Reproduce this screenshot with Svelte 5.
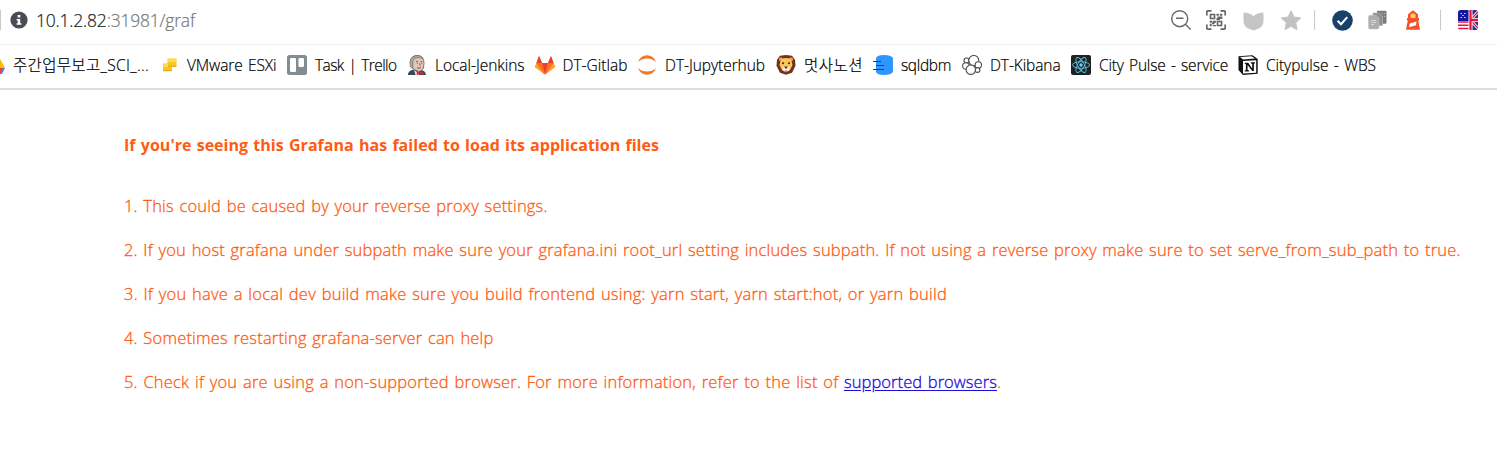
<script>
  const bookmarks = [
    { icon: 'ads', label: '주간업무보고_SCI_...', width: 136, slot: 174 },
    { icon: 'vmware', label: 'VMware ESXi', width: 89.5, slot: 128 },
    { icon: 'trello', label: 'Task | Trello', width: 81.5, slot: 120 },
    { icon: 'jenkins', label: 'Local-Jenkins', width: 89.5, slot: 127.5 },
    { icon: 'gitlab', label: 'DT-Gitlab', width: 65, slot: 102.5 },
    { icon: 'jupyter', label: 'DT-Jupyterhub', width: 100, slot: 139 },
    { icon: 'lion', label: '멋사노션', width: 59, slot: 97 },
    { icon: 'sqldbm', label: 'sqldbm', width: 50, slot: 89 },
    { icon: 'kibana', label: 'DT-Kibana', width: 70.5, slot: 109 },
    { icon: 'react', label: 'City Pulse - service', width: 129, slot: 167 },
    { icon: 'notion', label: 'Citypulse - WBS', width: 110, slot: 150 }
  ];
  const causes = [
    { text: '1. This could be caused by your reverse proxy settings.', width: 423.5 },
    { text: '2. If you host grafana under subpath make sure your grafana.ini root_url setting includes subpath. If not using a reverse proxy make sure to set serve_from_sub_path to true.', width: 1336.5 },
    { text: '3. If you have a local dev build make sure you build frontend using: yarn start, yarn start:hot, or yarn build', width: 823 },
    { text: '4. Sometimes restarting grafana-server can help', width: 369.5 }
  ];

  function fit(node, width) {
    const natural = node.getBoundingClientRect().width;
    node.style.letterSpacing = (width - natural) / node.textContent.length + 'px';
  }
</script>

<div class="page">
  <header class="address">
    <i class="edge"></i>
    <svg class="info" width="18" height="18" viewBox="0 0 18 18"><circle cx="9" cy="9" r="8.6" fill="#484c54"/><path d="M7.700 4h2.600v2.500H7.700zM6.600 8h3.600v4.200h1.200v1.600H6.600v-1.600h1.100V9.500H6.600z" fill="#fff"/></svg>
    <span class="url"><span use:fit={159}><b>10.1.2.82</b>:31981/graf</span></span>
    <div class="tools">
      <svg class="zoom" width="22" height="22" viewBox="0 0 22 22" fill="none" stroke="#666" stroke-width="1.400"><circle cx="9.700" cy="9.700" r="8"/><path d="M15.600 15.600l5 5M6 9.200h7.400"/></svg>
      <svg class="qr" width="20" height="20" viewBox="0 0 20 20" fill="none" stroke="#666" stroke-width="1.700"><path d="M.8 5.500V2.200Q.8.8 2.200.8h3.300M14.500.8h3.300q1.400 0 1.400 1.400v3.300M19.200 14.500v3.300q0 1.400-1.400 1.400h-3.300M5.500 19.200H2.200Q.8 19.200.8 17.800v-3.300M4.500 4.500h4v4h-4zM11.500 11.500h4v4h-4z"/><path d="M10.500 3.700h2.300v2h-2.300zM13.800 3.700h2.500v2h-2.500zM11.500 6.500h4.800v2.500h-2.300v1.300h-3.500V8h1zM3.700 10.800h2.500v2H3.700zM7 10.800h3v2H8.500v1.500H6v-2h1zM3.700 13.800h2v2.500h-2zM6.700 15h3.300v1.300H6.700z" fill="#666" stroke="none"/></svg>
      <svg class="pocket" width="21" height="19" viewBox="0 0 21 19"><path d="M.5 1.700Q.5.300 1.900.500L5.500 1.200Q8.600 2 10.500 4.300 12.400 2 15.500 1.200L19.100.500Q20.500.300 20.500 1.700V9q0 5-4.200 7.300L10.500 18.500 4.700 16.300Q.5 14 .5 9z" fill="#c5c5c5"/></svg>
      <svg class="star" width="22" height="21" viewBox="0 0 22 21"><path d="M11 .8l2.900 6.300 6.800.8-5 4.800 1.300 7L11 16.300l-6 3.400 1.300-7-5-4.800 6.800-.8z" fill="#c2c2c2" stroke="#c2c2c2" stroke-linejoin="round"/></svg>
      <i class="rule first"></i>
      <svg class="check" width="21" height="21" viewBox="0 0 21 21"><circle cx="10.500" cy="10.500" r="10.300" fill="#194069"/><path d="M5.600 10.700l3.400 3.500 6.300-7.100" fill="none" stroke="#fff" stroke-width="2"/></svg>
      <svg class="pages" width="19" height="20" viewBox="0 0 19 20"><path d="M9 .8h8.500q1 0 1 1v11q0 1-1 1H9z" fill="#7d7d7d"/><path d="M14 3h1v1h-1zM16 3h1v1h-1zM14 6h1v1h-1zM16 6h1v1h-1z" fill="#bbb"/><path d="M5 3h6l3.500 3v9.500H5z" fill="#8e8e8e" stroke="#b5b5b5" stroke-width=".7"/><path d="M.5 6.800q0-1.500 1.500-1.500h6l3 2.700v9.500q0 1.500-1.500 1.500H2Q.5 19 .5 17.500z" fill="#aeaeae" stroke="#c4c4c4" stroke-width=".6"/><path d="M3 10.500h5M3 12.500h5M3 14.500h3" stroke="#d6d6d6"/></svg>
      <svg class="lighthouse" width="16" height="20" viewBox="0 0 16 20"><path d="M3 4.200L8 .2l5 4V8h1v2.600h-.8L15 19.800H1L2.800 10.600H2V8h1z" fill="#f4512c"/><path d="M5.500 4.600Q8 2.600 10.500 4.600V8h-5z" fill="#ffd35b"/><path d="M4.800 13.500L11.500 11.500l-.5 3.800-7 2z" fill="#fff"/></svg>
      <i class="rule second"></i>
      <svg width="20" height="20" viewBox="0 0 20 20"><defs><clipPath id="flag"><rect width="20" height="20" rx="2.800"/></clipPath></defs><g clip-path="url(#flag)"><path fill="#fff" d="M0 0h20v20H0z"/><path d="M0 12h11M0 15.200h11M0 18.500h11" stroke="#df1541" stroke-width="1.600"/><path fill="#17159a" d="M0 0h11v11H0z"/><path d="M2.500 3.500h2M6 3.500h2M4.200 5.500h2M2.500 7.500h2M6 7.500h2" stroke="#dde" stroke-width="1.200" stroke-dasharray="1.500 .5"/><path fill="#2830a0" d="M13 0h7v20h-7z"/><path d="M12 10L21 1M12 10l9 9" stroke="#fff" stroke-width="3"/><path d="M12 10L21 1M12 10l9 9" stroke="#e3173e" stroke-width="1.300"/><path d="M12.500 0v20M12 10h8" stroke="#fff" stroke-width="4"/><path d="M12.500 0v20M12 10h8" stroke="#e3173e" stroke-width="2.300"/></g></svg>
    </div>
  </header>

  <nav class="bookmarks">
    {#each bookmarks as item}
      <div class="bookmark" style:width="{item.slot}px">
        <svg width="20" height="20" viewBox="0 0 20 20">
          {#if item.icon === 'ads'}
            <path d="M13 0l7 13H10z" fill="#fbbc04"/><path d="M10 13h10l-3 6h-7z" fill="#4285f4"/><path d="M10 13h8l-2 5h-6z" fill="#ea4335"/>
          {:else if item.icon === 'vmware'}
            <path d="M8.500 3.500h9v8h-4.500v4.500H4V8.500h4.500z" fill="#fcc624"/><path d="M9 4h8v3H9zM4.500 9H9v3H4.500z" fill="#ffdc4e"/><path d="M9 11.200h8.500M4 15.700h8.500" stroke="#e5a414"/>
          {:else if item.icon === 'trello'}
            <rect width="20" height="20" rx="2.500" fill="#838c91"/><rect x="3" y="3" width="6" height="14" rx="1.300" fill="#fff"/><rect x="11.500" y="3" width="5.500" height="9" rx="1.300" fill="#fff"/>
          {:else if item.icon === 'jenkins'}
            <path d="M.8 20q.5-4 4-5l3-.5 8 1q3 1 3 4.500z" fill="#34495b"/><path d="M3.500 7Q3.500.5 10.500.5q6.500.5 6.500 7.500l-.5 5q-1.500 3.500-5 3.500L7 14.500Q3.500 12 3.500 7z" fill="#e2c6b5" stroke="#4b4542" stroke-width=".7"/><path d="M3.500 12Q1 2.500 8.500.7q5.500-.9 7.300 2.600Q11 1.700 7.500 3.500 5 5.500 6 9l-.3 4.500z" fill="#aaa8a3" stroke="#555" stroke-width=".5"/><path d="M9 6.800l2-.4M13.500 6.500l1.700.5M10 8.500h.8M14 8.500h.7M10 12.800q2.500 1 4-.5M12.700 8.500l.5 2" stroke="#655247" stroke-width=".9" fill="none"/><path d="M7 15l3 2 2-.5V20H8.500z" fill="#e0e0e0"/><path d="M9.800 16.300l3.200 1.200 3.200-1.200v3.700L13 19l-3.200 1z" fill="#d52b32"/>
          {:else if item.icon === 'gitlab'}
            <path d="M4 1l3 7h6l3-7 4 11-10 7.500L0 12z" fill="#fc6d26"/><path d="M4 1l3 7H1.500zM16 1l-3 7h5.500zM7 8h6l-3 11.500z" fill="#e24329"/><path d="M1.500 8L0 12l10 7.500zM18.500 8L20 12l-10 7.500z" fill="#fca326"/><path d="M1.500 8H7l3 11.500zM18.500 8H13l-3 11.500z" fill="#fc6d26"/>
          {:else if item.icon === 'jupyter'}
            <path d="M1 7Q3.500.3 10 .3T19 7Q15.500 3.500 10 3.500T1 7zM1 13Q3.500 19.700 10 19.700T19 13q-3.500 3.500-9 3.500T1 13z" fill="#f37726"/>
          {:else if item.icon === 'lion'}
            <path d="M4 .8l6-.8 6 .8 3 4 .5 6-3.500 7-6 2-6-2L.5 10.800 1 4.800z" fill="#742f20"/><circle cx="4.800" cy="4.300" r="2" fill="#e99b3a"/><circle cx="15.200" cy="4.300" r="2" fill="#e99b3a"/><path d="M5 4q5-2 10 0l1.500 6-2.500 5q-4 3-8 0L3.500 10z" fill="#fcc654"/><circle cx="7" cy="8.300" r="1" fill="#2c211d"/><circle cx="13" cy="8.300" r="1" fill="#2c211d"/><path d="M6.500 12q3.500-2 7 0v3q-3.500 3-7 0z" fill="#fff0d4"/><path d="M8 11.500h4L10 14z" fill="#382120"/><path d="M8.700 15.500h2.600l-1.300 2.300z" fill="#ee5269"/>
          {:else if item.icon === 'sqldbm'}
            <path d="M3 3q1-3 8-3t9 3v14q-2 3-9 3t-8-3z" fill="#2e97ff"/><path d="M0 6.500h8M3 10.500h8M0 14.500h11" stroke="#134570" stroke-width="1.200"/>
          {:else if item.icon === 'kibana'}
            <g fill="#fff" stroke="#4d4d4d" stroke-width="1.100"><circle cx="4.500" cy="5.500" r="2.500"/><circle cx="11.800" cy="5.500" r="5"/><circle cx="3.900" cy="11" r="3.300"/><circle cx="16.300" cy="10" r="3.200"/><circle cx="15.500" cy="15" r="2.400"/><circle cx="8.800" cy="14.700" r="4.700"/></g>
          {:else if item.icon === 'react'}
            <rect width="20" height="20" rx="2" fill="#202124"/><g fill="none" stroke="#5ac4de" stroke-width=".9"><ellipse cx="10" cy="10" rx="8.500" ry="3.300"/><ellipse cx="10" cy="10" rx="8.500" ry="3.300" transform="rotate(60 10 10)"/><ellipse cx="10" cy="10" rx="8.500" ry="3.300" transform="rotate(120 10 10)"/></g><circle cx="10" cy="10" r="1.700" fill="#61dafb"/>
          {:else}
            <path d="M.5 1.300L14.500.2 19.700 4v14.700L5 19.900.5 15z" fill="#111"/><path d="M2 2l11.500-.8L17 3.600l-12 .8z" fill="#fff"/><path d="M5 6l13.200-.8v12.500L5 18.500z" fill="#fff"/><path d="M6.700 7.700h3.500l4 5.800V8.700l-1.300-.3V7.200h4v1.200l-1 .3V16h-1.700L9.600 9.900v5.200l1.500.4v1.100H6.700v-1.100l1.200-.4V9l-1.200-.3z" fill="#111"/>
          {/if}
        </svg>
        <span use:fit={item.width}>{item.label}</span>
      </div>
    {/each}
  </nav>

  <main>
    <h1><span use:fit={535}>If you're seeing this Grafana has failed to load its application files</span></h1>
    {#each causes as cause}
      <p><span use:fit={cause.width}>{cause.text}</span></p>
    {/each}
    <p><span use:fit={720}>5. Check if you are using a non-supported browser. For more information, refer to the list of&nbsp;</span><a href="#browsers" use:fit={153}>supported browsers</a>.</p>
  </main>
</div>

<style>
  :global(body) { background: #fff; overflow: hidden; }
  .page { width: 1497px; height: 452px; overflow: hidden; font-family: "Open Sans", "Noto Sans", "Noto Sans CJK KR", sans-serif; }
  svg { display: block; flex: none; }
  span, a { white-space: nowrap; }
  .address { display: flex; align-items: center; height: 45px; padding-bottom: 4px; box-sizing: border-box; border-bottom: 1px solid #f1f1f1; }
  .edge { width: 1px; height: 20px; background: #c9c9c9; }
  .info { margin-left: 9px; }
  .url { margin-left: 8px; font-size: 17.500px; font-weight: 300; color: #777; -webkit-text-stroke: .2px; }
  .url b { font-weight: 300; color: #222; }
  .tools { display: flex; align-items: center; margin-left: auto; margin-right: 19px; }
  .zoom { margin-right: -1px; transform: translateX(-1px); }
  .qr { margin-left: 14px; }
  .pocket { margin-left: 17px; margin-top: 2px; }
  .star { margin-left: 16px; }
  .rule { width: 1px; height: 20px; background: #c8c8c8; }
  .rule.first { margin-left: 12px; }
  .check { margin-left: 17px; }
  .pages { margin-left: 15px; }
  .lighthouse { margin-left: 18px; }
  .rule.second { margin: 0 17px 0 19px; }
  .bookmarks { display: flex; align-items: center; height: 45px; padding-bottom: 4px; box-sizing: border-box; margin-left: -15px; border-bottom: 2px solid #dcdddd; }
  .bookmark { display: flex; align-items: center; gap: 8px; flex: none; font-size: 15.500px; line-height: 22px; color: #000; font-weight: 300; word-spacing: 1.500px; }
  .bookmark span { -webkit-text-stroke: .2px; }
  main { padding: 44px 0 0 124px; color: #ff5b12; font-size: 16.500px; }
  h1 { margin: 0 0 28px; font-size: 16px; line-height: 44px; font-weight: 700; height: 22px; display: flex; align-items: center; word-spacing: 1px; }
  p { margin: 0; height: 44px; line-height: 44px; font-weight: 300; word-spacing: 1.200px; -webkit-text-stroke: .3px; }
  a { color: #1a0dde; text-decoration: underline; text-underline-offset: 2px; }
</style>
